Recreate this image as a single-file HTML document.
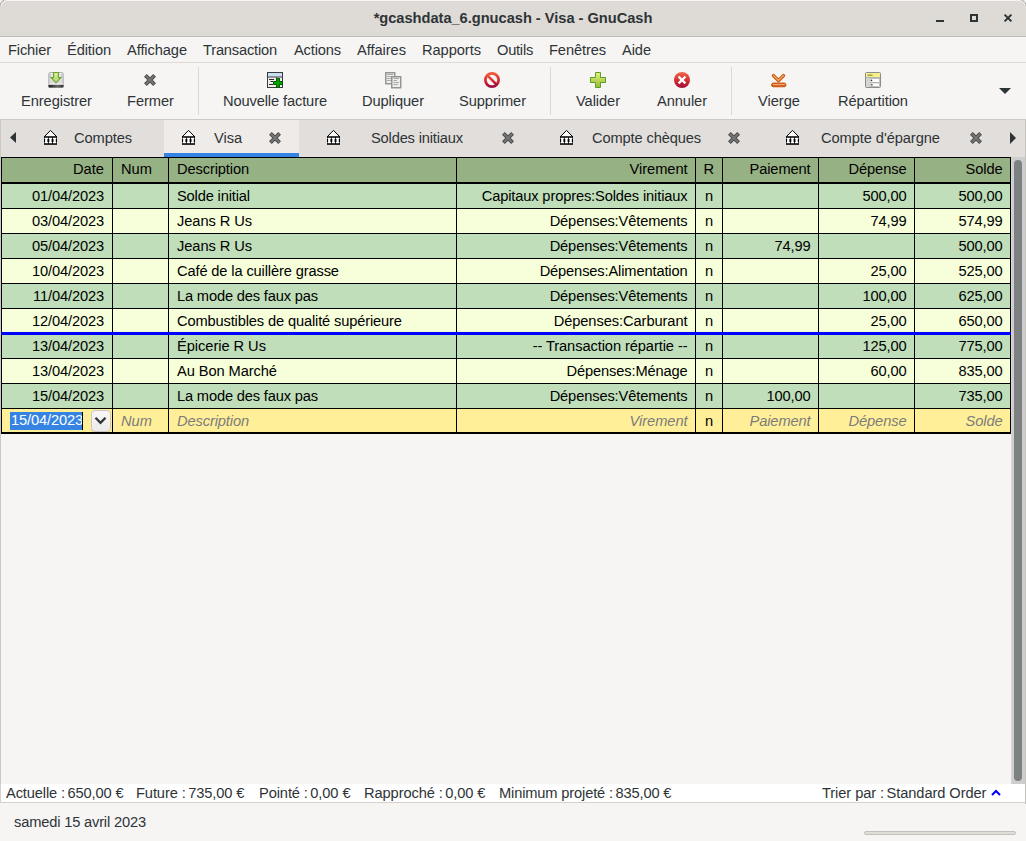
<!DOCTYPE html>
<html><head><meta charset="utf-8">
<style>
*{box-sizing:border-box;margin:0;padding:0}
html,body{width:1026px;height:841px;overflow:hidden;background:#f6f5f4;font-family:"Liberation Sans",sans-serif;font-size:14.67px;color:#2e3436;position:relative;font-kerning:normal}
.abs{position:absolute}
svg{position:absolute;overflow:visible}
.t{position:absolute;white-space:nowrap;line-height:17px}
.c{position:absolute;white-space:nowrap;overflow:hidden;color:#000}
</style></head><body>
<!-- title bar -->
<div class="abs" style="left:0;top:0;width:1026px;height:37px;background:#dedad6;border-bottom:1px solid #bfb9b4"></div>
<div class="abs" style="left:4px;top:0;width:1018px;height:1px;background:#f5f4f3"></div>
<svg style="left:0;top:0" width="8" height="8" viewBox="0 0 8 8"><path d="M0 0H5.5A5.5 5.5 0 0 0 0 5.5Z" fill="#f3f3f3"/><path d="M0.2 5.5A5.3 5.3 0 0 1 5.5 0.2" fill="none" stroke="#6a6a6a" stroke-width="0.9" stroke-dasharray="1 0.9"/><path d="M1.2 6A4.8 4.8 0 0 1 6 1.2" fill="none" stroke="#f8f8f8" stroke-width="0.8"/></svg>
<svg style="left:1018px;top:0" width="8" height="8" viewBox="0 0 8 8"><path d="M8 0H2.5A5.5 5.5 0 0 1 8 5.5Z" fill="#f3f3f3"/><path d="M7.8 5.5A5.3 5.3 0 0 0 2.5 0.2" fill="none" stroke="#6a6a6a" stroke-width="0.9" stroke-dasharray="1 0.9"/><path d="M6.8 6A4.8 4.8 0 0 0 2 1.2" fill="none" stroke="#f8f8f8" stroke-width="0.8"/></svg>
<div class="abs" style="left:0;top:37px;width:1026px;height:1px;background:#fafaf9"></div>
<div class="t" style="letter-spacing:-0.032px;left:0;width:1026px;top:10px;text-align:center;font-weight:bold;font-size:14.67px">*gcashdata_6.gnucash - Visa - GnuCash</div>
<div class="abs" style="left:936px;top:20px;width:8px;height:2px;background:#2e3436"></div>
<div class="abs" style="left:970px;top:14px;width:8px;height:8px;border:2px solid #2e3436"></div>
<svg style="left:1004px;top:14px" width="8" height="8" viewBox="0 0 8 8"><path d="M0.6 0.6L7.4 7.4M7.4 0.6L0.6 7.4" stroke="#2e3436" stroke-width="2"/></svg>
<!-- menu -->
<div class="abs" style="left:0;top:62px;width:1026px;height:1px;background:#dedbd7"></div>
<div class="t" style="letter-spacing:-0.145px;left:8px;top:42px">Fichier</div>
<div class="t" style="letter-spacing:-0.122px;left:67px;top:42px">Édition</div>
<div class="t" style="letter-spacing:-0.100px;left:127px;top:42px">Affichage</div>
<div class="t" style="letter-spacing:-0.191px;left:203px;top:42px">Transaction</div>
<div class="t" style="letter-spacing:-0.158px;left:294px;top:42px">Actions</div>
<div class="t" style="letter-spacing:-0.059px;left:357px;top:42px">Affaires</div>
<div class="t" style="letter-spacing:-0.066px;left:422px;top:42px">Rapports</div>
<div class="t" style="letter-spacing:-0.250px;left:497px;top:42px">Outils</div>
<div class="t" style="letter-spacing:-0.112px;left:549px;top:42px">Fenêtres</div>
<div class="t" style="letter-spacing:-0.090px;left:622px;top:42px">Aide</div>
<!-- toolbar -->
<div class="abs" style="left:0;top:119px;width:1026px;height:1px;background:#cdc8c3"></div>
<div class="t" style="letter-spacing:-0.068px;left:21px;top:93px;">Enregistrer</div><div class="t" style="letter-spacing:-0.045px;left:127px;top:93px;">Fermer</div><div class="t" style="letter-spacing:-0.125px;left:223px;top:93px;">Nouvelle facture</div><div class="t" style="letter-spacing:-0.088px;left:362px;top:93px;">Dupliquer</div><div class="t" style="letter-spacing:-0.074px;left:459px;top:93px;">Supprimer</div><div class="t" style="letter-spacing:-0.082px;left:576px;top:93px;">Valider</div><div class="t" style="letter-spacing:-0.081px;left:657px;top:93px;">Annuler</div><div class="t" style="letter-spacing:-0.023px;left:758px;top:93px;">Vierge</div><div class="t" style="letter-spacing:-0.086px;left:838px;top:93px;">Répartition</div><svg style="left:48px;top:72px" width="16" height="16" viewBox="0 0 16 16"><defs><linearGradient id="gsv" x1="0" y1="0" x2="0" y2="1"><stop offset="0" stop-color="#ececec"/><stop offset="1" stop-color="#cfcfcf"/></linearGradient>
<linearGradient id="gsb" x1="0" y1="0" x2="1" y2="0"><stop offset="0" stop-color="#1e1e1e"/><stop offset="0.6" stop-color="#6a6a6a"/><stop offset="1" stop-color="#2e2e2e"/></linearGradient>
<linearGradient id="gsa" x1="0" y1="0" x2="0" y2="1"><stop offset="0" stop-color="#e0ef9a"/><stop offset="1" stop-color="#b0d468"/></linearGradient></defs>
<rect x="0.8" y="0.5" width="14.4" height="15" rx="1.5" fill="url(#gsv)" stroke="#a5a5a5" stroke-width="0.9"/>
<path d="M2.2 2V5M13.8 2V5" stroke="#b8b8c0" stroke-width="0.8"/>
<rect x="0.5" y="12.6" width="15" height="3" rx="1.2" fill="url(#gsb)"/>
<rect x="1" y="11.5" width="14" height="1.1" fill="#fbfbfb"/>
<path d="M5.6 0.5H10.4V5.6H13L8 10.8L3 5.6H5.6Z" fill="url(#gsa)" stroke="#6aa436" stroke-width="1.1"/></svg><svg style="left:142px;top:72px" width="16" height="16" viewBox="0 0 16 16"><path d="M3.4 3.4L12.6 12.6M12.6 3.4L3.4 12.6" stroke="#4a4a4a" stroke-width="3.9"/>
<path d="M3.9 3.9L12.1 12.1M12.1 3.9L3.9 12.1" stroke="#787878" stroke-width="1.9"/></svg><svg style="left:267px;top:72px" width="16" height="16" viewBox="0 0 16 16"><rect x="0.5" y="0.5" width="15" height="15" fill="#eeeeec" stroke="#3a3a3a"/>
<rect x="1" y="1" width="14" height="3.5" fill="#c6dff4"/>
<rect x="1" y="4.5" width="14" height="1" fill="#3a3a3a"/>
<path d="M2 7.5H7M3.5 9.5H6M2 12.5H6" stroke="#2a2a2a" stroke-width="1"/>
<path d="M9.5 5V6.5" stroke="#555" stroke-width="1"/>
<path d="M9.5 6.5H12.5V9.5H15.5V12.5H12.5V15.5H9.5V12.5H6.5V9.5H9.5Z" fill="#00a000" stroke="#005800" stroke-width="1"/></svg><svg style="left:385px;top:72px" width="16" height="16" viewBox="0 0 16 16"><rect x="0.75" y="0.75" width="9" height="11" fill="#eeeeec" stroke="#90928d" stroke-width="1.4"/>
<path d="M2 2.5H8M2 4.5H8M2 6.5H8M2 8.5H8" stroke="#aaaca8" stroke-width="1"/>
<rect x="6.75" y="4.75" width="9" height="11" fill="#eeeeec" stroke="#90928d" stroke-width="1.4"/>
<path d="M8.5 6.5H14M8.5 8.5H12M8.5 10.5H14M8.5 12.5H13" stroke="#aaaca8" stroke-width="1"/></svg><svg style="left:484px;top:72px" width="16" height="16" viewBox="0 0 16 16"><defs><linearGradient id="gst" x1="0" y1="0" x2="0" y2="1"><stop offset="0" stop-color="#ef5a3c"/><stop offset="0.6" stop-color="#d42a35"/><stop offset="1" stop-color="#9a0e3c"/></linearGradient></defs>
<circle cx="8" cy="8" r="6.6" fill="none" stroke="url(#gst)" stroke-width="2.8"/>
<path d="M3.6 3.6L12.4 12.4" stroke="url(#gst)" stroke-width="2.6"/></svg><svg style="left:590px;top:72px" width="16" height="16" viewBox="0 0 16 16"><defs><linearGradient id="gpl" x1="0" y1="0" x2="0" y2="1"><stop offset="0" stop-color="#e4f27a"/><stop offset="1" stop-color="#93bb2e"/></linearGradient></defs>
<path d="M5.5 0.5H10.5V5.5H15.5V10.5H10.5V15.5H5.5V10.5H0.5V5.5H5.5Z" fill="url(#gpl)" stroke="#5d9c2b" stroke-width="1"/></svg><svg style="left:674px;top:72px" width="16" height="16" viewBox="0 0 16 16"><defs><linearGradient id="gca" x1="0" y1="0" x2="0" y2="1"><stop offset="0" stop-color="#f06a4a"/><stop offset="0.55" stop-color="#d52b33"/><stop offset="1" stop-color="#9c0f3c"/></linearGradient></defs>
<circle cx="8" cy="8" r="8" fill="url(#gca)"/>
<path d="M4.6 4.6L11.4 11.4M11.4 4.6L4.6 11.4" stroke="#fff" stroke-width="2.2"/></svg><svg style="left:771px;top:72px" width="16" height="16" viewBox="0 0 16 16"><path d="M2.5 3.6L7.5 8.6L12.5 3.6" fill="none" stroke="#c85000" stroke-width="3.4" stroke-linecap="round" stroke-linejoin="round"/>
<path d="M2.5 3.6L7.5 8.6L12.5 3.6" fill="none" stroke="#f2a86a" stroke-width="1.4" stroke-linecap="round" stroke-linejoin="round"/>
<rect x="0.5" y="11" width="14.5" height="3.8" rx="1.9" fill="#d65a10" stroke="#c04a00" stroke-width="0.8"/>
<rect x="1.8" y="11.9" width="12" height="1.2" fill="#f4a874"/></svg><svg style="left:865px;top:72px" width="16" height="16" viewBox="0 0 16 16"><rect x="0.5" y="0.5" width="15" height="15" rx="1" fill="#e2e2e0" stroke="#8c8c8a"/>
<rect x="1" y="1" width="14" height="4.2" fill="#f5f08c"/>
<rect x="2.5" y="2.5" width="5" height="1.5" fill="#6f6c2a" opacity="0.6"/>
<rect x="1" y="5.2" width="14" height="0.8" fill="#a8a8a6"/>
<rect x="5" y="6.5" width="9.5" height="3.8" fill="#fff" stroke="#a0a09e" stroke-width="0.6"/>
<rect x="5" y="11" width="9.5" height="3.6" fill="#fff" stroke="#a0a09e" stroke-width="0.6"/>
<rect x="1" y="6" width="3.5" height="9" fill="#d6d6d4"/>
<circle cx="6.5" cy="8.4" r="0.8" fill="#333"/>
<rect x="5.8" y="12.3" width="1.8" height="1.2" fill="#333"/></svg>
<div class="abs" style="left:198px;top:67px;width:1px;height:48px;background:#dcd8d4"></div>
<div class="abs" style="left:550px;top:67px;width:1px;height:48px;background:#dcd8d4"></div>
<div class="abs" style="left:731px;top:67px;width:1px;height:48px;background:#dcd8d4"></div>
<svg style="left:999px;top:88px" width="12" height="6" viewBox="0 0 12 6"><path d="M0 0H12L6 6Z" fill="#2e3436"/></svg>
<!-- tabs -->
<div class="abs" style="left:0;top:120px;width:1026px;height:37px;background:#e1dedb"></div>
<div class="abs" style="left:164px;top:120px;width:135px;height:37px;background:#eeebe9"></div>
<div class="abs" style="left:164px;top:153px;width:135px;height:4px;background:#3584e4"></div>
<svg style="left:10px;top:132px" width="6" height="11" viewBox="0 0 6 11"><path d="M6 0V11L0 5.5Z" fill="#2e3436"/></svg><svg style="left:1010px;top:132px" width="6" height="12" viewBox="0 0 6 12"><path d="M0 0V12L6 6Z" fill="#2e3436"/></svg><svg style="left:44px;top:130px" width="13" height="15" viewBox="0 0 13 15"><path d="M6.5 0.4L12.9 6.9H0.1Z" fill="#fff" stroke="#000" stroke-width="1"/>
<rect x="0" y="6.6" width="13" height="8.2" fill="#000"/>
<path d="M0.55 7.8H3.95V8.9H3.40V12.1H3.95V13.2H0.55V12.1H1.10V8.9H0.55Z" fill="#fff"/><path d="M4.75 7.8H8.15V8.9H7.60V12.1H8.15V13.2H4.75V12.1H5.30V8.9H4.75Z" fill="#fff"/><path d="M8.95 7.8H12.35V8.9H11.80V12.1H12.35V13.2H8.95V12.1H9.50V8.9H8.95Z" fill="#fff"/></svg><div class="t" style="letter-spacing:-0.100px;left:74px;top:130px;">Comptes</div><svg style="left:182px;top:130px" width="13" height="15" viewBox="0 0 13 15"><path d="M6.5 0.4L12.9 6.9H0.1Z" fill="#fff" stroke="#000" stroke-width="1"/>
<rect x="0" y="6.6" width="13" height="8.2" fill="#000"/>
<path d="M0.55 7.8H3.95V8.9H3.40V12.1H3.95V13.2H0.55V12.1H1.10V8.9H0.55Z" fill="#fff"/><path d="M4.75 7.8H8.15V8.9H7.60V12.1H8.15V13.2H4.75V12.1H5.30V8.9H4.75Z" fill="#fff"/><path d="M8.95 7.8H12.35V8.9H11.80V12.1H12.35V13.2H8.95V12.1H9.50V8.9H8.95Z" fill="#fff"/></svg><div class="t" style="letter-spacing:-0.068px;left:214px;top:130px;">Visa</div><svg style="left:267px;top:130px" width="16" height="16" viewBox="0 0 16 16"><path d="M3.4 3.4L12.6 12.6M12.6 3.4L3.4 12.6" stroke="#4a4a4a" stroke-width="3.9"/>
<path d="M3.9 3.9L12.1 12.1M12.1 3.9L3.9 12.1" stroke="#787878" stroke-width="1.9"/></svg><svg style="left:327px;top:130px" width="13" height="15" viewBox="0 0 13 15"><path d="M6.5 0.4L12.9 6.9H0.1Z" fill="#fff" stroke="#000" stroke-width="1"/>
<rect x="0" y="6.6" width="13" height="8.2" fill="#000"/>
<path d="M0.55 7.8H3.95V8.9H3.40V12.1H3.95V13.2H0.55V12.1H1.10V8.9H0.55Z" fill="#fff"/><path d="M4.75 7.8H8.15V8.9H7.60V12.1H8.15V13.2H4.75V12.1H5.30V8.9H4.75Z" fill="#fff"/><path d="M8.95 7.8H12.35V8.9H11.80V12.1H12.35V13.2H8.95V12.1H9.50V8.9H8.95Z" fill="#fff"/></svg><div class="t" style="letter-spacing:-0.173px;left:371px;top:130px;">Soldes initiaux</div><svg style="left:500px;top:130px" width="16" height="16" viewBox="0 0 16 16"><path d="M3.4 3.4L12.6 12.6M12.6 3.4L3.4 12.6" stroke="#4a4a4a" stroke-width="3.9"/>
<path d="M3.9 3.9L12.1 12.1M12.1 3.9L3.9 12.1" stroke="#787878" stroke-width="1.9"/></svg><svg style="left:560px;top:130px" width="13" height="15" viewBox="0 0 13 15"><path d="M6.5 0.4L12.9 6.9H0.1Z" fill="#fff" stroke="#000" stroke-width="1"/>
<rect x="0" y="6.6" width="13" height="8.2" fill="#000"/>
<path d="M0.55 7.8H3.95V8.9H3.40V12.1H3.95V13.2H0.55V12.1H1.10V8.9H0.55Z" fill="#fff"/><path d="M4.75 7.8H8.15V8.9H7.60V12.1H8.15V13.2H4.75V12.1H5.30V8.9H4.75Z" fill="#fff"/><path d="M8.95 7.8H12.35V8.9H11.80V12.1H12.35V13.2H8.95V12.1H9.50V8.9H8.95Z" fill="#fff"/></svg><div class="t" style="letter-spacing:-0.136px;left:592px;top:130px;">Compte chèques</div><svg style="left:726px;top:130px" width="16" height="16" viewBox="0 0 16 16"><path d="M3.4 3.4L12.6 12.6M12.6 3.4L3.4 12.6" stroke="#4a4a4a" stroke-width="3.9"/>
<path d="M3.9 3.9L12.1 12.1M12.1 3.9L3.9 12.1" stroke="#787878" stroke-width="1.9"/></svg><svg style="left:786px;top:130px" width="13" height="15" viewBox="0 0 13 15"><path d="M6.5 0.4L12.9 6.9H0.1Z" fill="#fff" stroke="#000" stroke-width="1"/>
<rect x="0" y="6.6" width="13" height="8.2" fill="#000"/>
<path d="M0.55 7.8H3.95V8.9H3.40V12.1H3.95V13.2H0.55V12.1H1.10V8.9H0.55Z" fill="#fff"/><path d="M4.75 7.8H8.15V8.9H7.60V12.1H8.15V13.2H4.75V12.1H5.30V8.9H4.75Z" fill="#fff"/><path d="M8.95 7.8H12.35V8.9H11.80V12.1H12.35V13.2H8.95V12.1H9.50V8.9H8.95Z" fill="#fff"/></svg><div class="t" style="letter-spacing:-0.077px;left:821px;top:130px;">Compte d'épargne</div><svg style="left:968px;top:130px" width="16" height="16" viewBox="0 0 16 16"><path d="M3.4 3.4L12.6 12.6M12.6 3.4L3.4 12.6" stroke="#4a4a4a" stroke-width="3.9"/>
<path d="M3.9 3.9L12.1 12.1M12.1 3.9L3.9 12.1" stroke="#787878" stroke-width="1.9"/></svg>
<div class="abs" style="left:1px;top:157px;width:1010px;height:277px;background:#000"></div><div class="abs" style="left:2px;top:158px;width:1008px;height:24px;background:#96b183"></div><div class="abs" style="left:2px;top:184px;width:1008px;height:24px;background:#bfdeb9"></div><div class="abs" style="left:2px;top:209px;width:1008px;height:24px;background:#f6ffda"></div><div class="abs" style="left:2px;top:234px;width:1008px;height:24px;background:#bfdeb9"></div><div class="abs" style="left:2px;top:259px;width:1008px;height:24px;background:#f6ffda"></div><div class="abs" style="left:2px;top:284px;width:1008px;height:24px;background:#bfdeb9"></div><div class="abs" style="left:2px;top:309px;width:1008px;height:24px;background:#f6ffda"></div><div class="abs" style="left:2px;top:334px;width:1008px;height:24px;background:#bfdeb9"></div><div class="abs" style="left:2px;top:359px;width:1008px;height:24px;background:#f6ffda"></div><div class="abs" style="left:2px;top:384px;width:1008px;height:24px;background:#bfdeb9"></div><div class="abs" style="left:2px;top:409px;width:1008px;height:23px;background:#ffef98"></div><div class="abs" style="left:1px;top:157px;width:1px;height:277px;background:#000"></div><div class="abs" style="left:112px;top:157px;width:1px;height:277px;background:#000"></div><div class="abs" style="left:168px;top:157px;width:1px;height:277px;background:#000"></div><div class="abs" style="left:456px;top:157px;width:1px;height:277px;background:#000"></div><div class="abs" style="left:695px;top:157px;width:1px;height:277px;background:#000"></div><div class="abs" style="left:722px;top:157px;width:1px;height:277px;background:#000"></div><div class="abs" style="left:818px;top:157px;width:1px;height:277px;background:#000"></div><div class="abs" style="left:914px;top:157px;width:1px;height:277px;background:#000"></div><div class="abs" style="left:1010px;top:157px;width:1px;height:277px;background:#000"></div><div class="abs" style="left:1px;top:332px;width:1010px;height:3px;background:#0000ff"></div><div class="c" style="letter-spacing:0.003px;left:2px;top:157px;width:110px;height:24px;line-height:24px;text-align:right;padding-right:8px;">Date</div><div class="c" style="letter-spacing:0.009px;left:113px;top:157px;width:55px;height:24px;line-height:24px;text-align:left;padding-left:8px;">Num</div><div class="c" style="letter-spacing:-0.125px;left:169px;top:157px;width:287px;height:24px;line-height:24px;text-align:left;padding-left:8px;">Description</div><div class="c" style="letter-spacing:-0.055px;left:457px;top:157px;width:238px;height:24px;line-height:24px;text-align:right;padding-right:7.5px;">Virement</div><div class="c" style="letter-spacing:0.406px;left:696px;top:157px;width:26px;height:24px;line-height:24px;text-align:center;">R</div><div class="c" style="letter-spacing:-0.122px;left:723px;top:157px;width:95px;height:24px;line-height:24px;text-align:right;padding-right:7.5px;">Paiement</div><div class="c" style="letter-spacing:-0.103px;left:819px;top:157px;width:95px;height:24px;line-height:24px;text-align:right;padding-right:7.5px;">Dépense</div><div class="c" style="letter-spacing:-0.104px;left:915px;top:157px;width:95px;height:24px;line-height:24px;text-align:right;padding-right:7.5px;">Solde</div><div class="c" style="letter-spacing:-0.142px;left:2px;top:184px;width:110px;height:24px;line-height:24px;text-align:right;padding-right:8px;">01/04/2023</div><div class="c" style="letter-spacing:0.000px;left:113px;top:184px;width:55px;height:24px;line-height:24px;text-align:left;padding-left:8px;"></div><div class="c" style="letter-spacing:-0.156px;left:169px;top:184px;width:287px;height:24px;line-height:24px;text-align:left;padding-left:8px;">Solde initial</div><div class="c" style="letter-spacing:-0.137px;left:457px;top:184px;width:238px;height:24px;line-height:24px;text-align:right;padding-right:7.5px;">Capitaux propres:Soldes initiaux</div><div class="c" style="letter-spacing:-0.159px;left:696px;top:184px;width:26px;height:24px;line-height:24px;text-align:center;">n</div><div class="c" style="letter-spacing:0.000px;left:723px;top:184px;width:95px;height:24px;line-height:24px;text-align:right;padding-right:7.5px;"></div><div class="c" style="letter-spacing:-0.145px;left:819px;top:184px;width:95px;height:24px;line-height:24px;text-align:right;padding-right:7.5px;">500,00</div><div class="c" style="letter-spacing:-0.145px;left:915px;top:184px;width:95px;height:24px;line-height:24px;text-align:right;padding-right:7.5px;">500,00</div><div class="c" style="letter-spacing:-0.142px;left:2px;top:209px;width:110px;height:24px;line-height:24px;text-align:right;padding-right:8px;">03/04/2023</div><div class="c" style="letter-spacing:0.000px;left:113px;top:209px;width:55px;height:24px;line-height:24px;text-align:left;padding-left:8px;"></div><div class="c" style="letter-spacing:-0.082px;left:169px;top:209px;width:287px;height:24px;line-height:24px;text-align:left;padding-left:8px;">Jeans R Us</div><div class="c" style="letter-spacing:-0.126px;left:457px;top:209px;width:238px;height:24px;line-height:24px;text-align:right;padding-right:7.5px;">Dépenses:Vêtements</div><div class="c" style="letter-spacing:-0.159px;left:696px;top:209px;width:26px;height:24px;line-height:24px;text-align:center;">n</div><div class="c" style="letter-spacing:0.000px;left:723px;top:209px;width:95px;height:24px;line-height:24px;text-align:right;padding-right:7.5px;"></div><div class="c" style="letter-spacing:-0.142px;left:819px;top:209px;width:95px;height:24px;line-height:24px;text-align:right;padding-right:7.5px;">74,99</div><div class="c" style="letter-spacing:-0.145px;left:915px;top:209px;width:95px;height:24px;line-height:24px;text-align:right;padding-right:7.5px;">574,99</div><div class="c" style="letter-spacing:-0.142px;left:2px;top:234px;width:110px;height:24px;line-height:24px;text-align:right;padding-right:8px;">05/04/2023</div><div class="c" style="letter-spacing:0.000px;left:113px;top:234px;width:55px;height:24px;line-height:24px;text-align:left;padding-left:8px;"></div><div class="c" style="letter-spacing:-0.082px;left:169px;top:234px;width:287px;height:24px;line-height:24px;text-align:left;padding-left:8px;">Jeans R Us</div><div class="c" style="letter-spacing:-0.126px;left:457px;top:234px;width:238px;height:24px;line-height:24px;text-align:right;padding-right:7.5px;">Dépenses:Vêtements</div><div class="c" style="letter-spacing:-0.159px;left:696px;top:234px;width:26px;height:24px;line-height:24px;text-align:center;">n</div><div class="c" style="letter-spacing:-0.142px;left:723px;top:234px;width:95px;height:24px;line-height:24px;text-align:right;padding-right:7.5px;">74,99</div><div class="c" style="letter-spacing:0.000px;left:819px;top:234px;width:95px;height:24px;line-height:24px;text-align:right;padding-right:7.5px;"></div><div class="c" style="letter-spacing:-0.145px;left:915px;top:234px;width:95px;height:24px;line-height:24px;text-align:right;padding-right:7.5px;">500,00</div><div class="c" style="letter-spacing:-0.142px;left:2px;top:259px;width:110px;height:24px;line-height:24px;text-align:right;padding-right:8px;">10/04/2023</div><div class="c" style="letter-spacing:0.000px;left:113px;top:259px;width:55px;height:24px;line-height:24px;text-align:left;padding-left:8px;"></div><div class="c" style="letter-spacing:-0.136px;left:169px;top:259px;width:287px;height:24px;line-height:24px;text-align:left;padding-left:8px;">Café de la cuillère grasse</div><div class="c" style="letter-spacing:-0.136px;left:457px;top:259px;width:238px;height:24px;line-height:24px;text-align:right;padding-right:7.5px;">Dépenses:Alimentation</div><div class="c" style="letter-spacing:-0.159px;left:696px;top:259px;width:26px;height:24px;line-height:24px;text-align:center;">n</div><div class="c" style="letter-spacing:0.000px;left:723px;top:259px;width:95px;height:24px;line-height:24px;text-align:right;padding-right:7.5px;"></div><div class="c" style="letter-spacing:-0.142px;left:819px;top:259px;width:95px;height:24px;line-height:24px;text-align:right;padding-right:7.5px;">25,00</div><div class="c" style="letter-spacing:-0.145px;left:915px;top:259px;width:95px;height:24px;line-height:24px;text-align:right;padding-right:7.5px;">525,00</div><div class="c" style="letter-spacing:-0.133px;left:2px;top:284px;width:110px;height:24px;line-height:24px;text-align:right;padding-right:8px;">11/04/2023</div><div class="c" style="letter-spacing:0.000px;left:113px;top:284px;width:55px;height:24px;line-height:24px;text-align:left;padding-left:8px;"></div><div class="c" style="letter-spacing:-0.168px;left:169px;top:284px;width:287px;height:24px;line-height:24px;text-align:left;padding-left:8px;">La mode des faux pas</div><div class="c" style="letter-spacing:-0.126px;left:457px;top:284px;width:238px;height:24px;line-height:24px;text-align:right;padding-right:7.5px;">Dépenses:Vêtements</div><div class="c" style="letter-spacing:-0.159px;left:696px;top:284px;width:26px;height:24px;line-height:24px;text-align:center;">n</div><div class="c" style="letter-spacing:0.000px;left:723px;top:284px;width:95px;height:24px;line-height:24px;text-align:right;padding-right:7.5px;"></div><div class="c" style="letter-spacing:-0.145px;left:819px;top:284px;width:95px;height:24px;line-height:24px;text-align:right;padding-right:7.5px;">100,00</div><div class="c" style="letter-spacing:-0.145px;left:915px;top:284px;width:95px;height:24px;line-height:24px;text-align:right;padding-right:7.5px;">625,00</div><div class="c" style="letter-spacing:-0.142px;left:2px;top:309px;width:110px;height:24px;line-height:24px;text-align:right;padding-right:8px;">12/04/2023</div><div class="c" style="letter-spacing:0.000px;left:113px;top:309px;width:55px;height:24px;line-height:24px;text-align:left;padding-left:8px;"></div><div class="c" style="letter-spacing:-0.146px;left:169px;top:309px;width:287px;height:24px;line-height:24px;text-align:left;padding-left:8px;">Combustibles de qualité supérieure</div><div class="c" style="letter-spacing:-0.076px;left:457px;top:309px;width:238px;height:24px;line-height:24px;text-align:right;padding-right:7.5px;">Dépenses:Carburant</div><div class="c" style="letter-spacing:-0.159px;left:696px;top:309px;width:26px;height:24px;line-height:24px;text-align:center;">n</div><div class="c" style="letter-spacing:0.000px;left:723px;top:309px;width:95px;height:24px;line-height:24px;text-align:right;padding-right:7.5px;"></div><div class="c" style="letter-spacing:-0.142px;left:819px;top:309px;width:95px;height:24px;line-height:24px;text-align:right;padding-right:7.5px;">25,00</div><div class="c" style="letter-spacing:-0.145px;left:915px;top:309px;width:95px;height:24px;line-height:24px;text-align:right;padding-right:7.5px;">650,00</div><div class="c" style="letter-spacing:-0.142px;left:2px;top:334px;width:110px;height:24px;line-height:24px;text-align:right;padding-right:8px;">13/04/2023</div><div class="c" style="letter-spacing:0.000px;left:113px;top:334px;width:55px;height:24px;line-height:24px;text-align:left;padding-left:8px;"></div><div class="c" style="letter-spacing:-0.052px;left:169px;top:334px;width:287px;height:24px;line-height:24px;text-align:left;padding-left:8px;">Épicerie R Us</div><div class="c" style="letter-spacing:-0.090px;left:457px;top:334px;width:238px;height:24px;line-height:24px;text-align:right;padding-right:7.5px;">-- Transaction répartie --</div><div class="c" style="letter-spacing:-0.159px;left:696px;top:334px;width:26px;height:24px;line-height:24px;text-align:center;">n</div><div class="c" style="letter-spacing:0.000px;left:723px;top:334px;width:95px;height:24px;line-height:24px;text-align:right;padding-right:7.5px;"></div><div class="c" style="letter-spacing:-0.145px;left:819px;top:334px;width:95px;height:24px;line-height:24px;text-align:right;padding-right:7.5px;">125,00</div><div class="c" style="letter-spacing:-0.145px;left:915px;top:334px;width:95px;height:24px;line-height:24px;text-align:right;padding-right:7.5px;">775,00</div><div class="c" style="letter-spacing:-0.142px;left:2px;top:359px;width:110px;height:24px;line-height:24px;text-align:right;padding-right:8px;">13/04/2023</div><div class="c" style="letter-spacing:0.000px;left:113px;top:359px;width:55px;height:24px;line-height:24px;text-align:left;padding-left:8px;"></div><div class="c" style="letter-spacing:-0.086px;left:169px;top:359px;width:287px;height:24px;line-height:24px;text-align:left;padding-left:8px;">Au Bon Marché</div><div class="c" style="letter-spacing:-0.143px;left:457px;top:359px;width:238px;height:24px;line-height:24px;text-align:right;padding-right:7.5px;">Dépenses:Ménage</div><div class="c" style="letter-spacing:-0.159px;left:696px;top:359px;width:26px;height:24px;line-height:24px;text-align:center;">n</div><div class="c" style="letter-spacing:0.000px;left:723px;top:359px;width:95px;height:24px;line-height:24px;text-align:right;padding-right:7.5px;"></div><div class="c" style="letter-spacing:-0.142px;left:819px;top:359px;width:95px;height:24px;line-height:24px;text-align:right;padding-right:7.5px;">60,00</div><div class="c" style="letter-spacing:-0.145px;left:915px;top:359px;width:95px;height:24px;line-height:24px;text-align:right;padding-right:7.5px;">835,00</div><div class="c" style="letter-spacing:-0.142px;left:2px;top:384px;width:110px;height:24px;line-height:24px;text-align:right;padding-right:8px;">15/04/2023</div><div class="c" style="letter-spacing:0.000px;left:113px;top:384px;width:55px;height:24px;line-height:24px;text-align:left;padding-left:8px;"></div><div class="c" style="letter-spacing:-0.168px;left:169px;top:384px;width:287px;height:24px;line-height:24px;text-align:left;padding-left:8px;">La mode des faux pas</div><div class="c" style="letter-spacing:-0.126px;left:457px;top:384px;width:238px;height:24px;line-height:24px;text-align:right;padding-right:7.5px;">Dépenses:Vêtements</div><div class="c" style="letter-spacing:-0.159px;left:696px;top:384px;width:26px;height:24px;line-height:24px;text-align:center;">n</div><div class="c" style="letter-spacing:-0.145px;left:723px;top:384px;width:95px;height:24px;line-height:24px;text-align:right;padding-right:7.5px;">100,00</div><div class="c" style="letter-spacing:0.000px;left:819px;top:384px;width:95px;height:24px;line-height:24px;text-align:right;padding-right:7.5px;"></div><div class="c" style="letter-spacing:-0.145px;left:915px;top:384px;width:95px;height:24px;line-height:24px;text-align:right;padding-right:7.5px;">735,00</div><div class="c" style="letter-spacing:0.000px;left:2px;top:409px;width:110px;height:24px;line-height:24px;text-align:right;padding-right:8px;"></div><div class="c" style="letter-spacing:0.009px;left:113px;top:409px;width:55px;height:24px;line-height:24px;text-align:left;padding-left:8px;color:#7c7c7c;font-style:italic;">Num</div><div class="c" style="letter-spacing:-0.125px;left:169px;top:409px;width:287px;height:24px;line-height:24px;text-align:left;padding-left:8px;color:#7c7c7c;font-style:italic;">Description</div><div class="c" style="letter-spacing:-0.055px;left:457px;top:409px;width:238px;height:24px;line-height:24px;text-align:right;padding-right:7.5px;color:#7c7c7c;font-style:italic;">Virement</div><div class="c" style="letter-spacing:-0.159px;left:696px;top:409px;width:26px;height:24px;line-height:24px;text-align:center;">n</div><div class="c" style="letter-spacing:-0.122px;left:723px;top:409px;width:95px;height:24px;line-height:24px;text-align:right;padding-right:7.5px;color:#7c7c7c;font-style:italic;">Paiement</div><div class="c" style="letter-spacing:-0.103px;left:819px;top:409px;width:95px;height:24px;line-height:24px;text-align:right;padding-right:7.5px;color:#7c7c7c;font-style:italic;">Dépense</div><div class="c" style="letter-spacing:-0.104px;left:915px;top:409px;width:95px;height:24px;line-height:24px;text-align:right;padding-right:7.5px;color:#7c7c7c;font-style:italic;">Solde</div><div class="abs" style="left:10px;top:412px;width:72px;height:18px;background:#3584e4"></div><div class="c" style="letter-spacing:-0.142px;left:11px;top:408px;height:24px;line-height:24px;color:#fff">15/04/2023</div><div class="abs" style="left:82px;top:412px;width:1px;height:18px;background:#000"></div><div class="abs" style="left:91px;top:410px;width:20px;height:22px;border:1px solid #cdc7c2;border-radius:4px;background:linear-gradient(#f8f7f6,#edebe9);box-shadow:0 1px 1px rgba(0,0,0,0.07)"></div><svg class="abs" style="left:94px;top:416px" width="13" height="10" viewBox="0 0 13 10"><path d="M1.5 1.8 L6.5 6.8 L11.5 1.8" fill="none" stroke="#2e3436" stroke-width="2.3"/></svg>
<!-- scrollbar -->
<div class="abs" style="left:1011px;top:157px;width:14px;height:627px;background:#cecece;border-left:1px solid #d6d6d6"></div>
<div class="abs" style="left:1014px;top:160px;width:8px;height:621px;background:#7e8182;border-radius:4px"></div>
<div class="abs" style="left:1025px;top:120px;width:1px;height:684px;background:#c6c1bc"></div>
<div class="abs" style="left:0;top:120px;width:1px;height:683px;background:#cdc8c3"></div>
<!-- summary -->
<div class="abs" style="left:0;top:784px;width:1025px;height:19px;background:#fff;border-bottom:1px solid #d5d0cb;border-left:1px solid #d5d0cb"></div>
<div class="t" style="letter-spacing:-0.136px;left:6px;top:785px;">Actuelle :<i style="margin-left:2.5px"></i>650,00 €</div><div class="t" style="letter-spacing:-0.103px;left:136px;top:785px;">Future :<i style="margin-left:2.5px"></i>735,00 €</div><div class="t" style="letter-spacing:-0.110px;left:259px;top:785px;">Pointé :<i style="margin-left:2.5px"></i>0,00 €</div><div class="t" style="letter-spacing:-0.100px;left:364px;top:785px;">Rapproché :<i style="margin-left:2.5px"></i>0,00 €</div><div class="t" style="letter-spacing:-0.147px;left:499px;top:785px;">Minimum projeté :<i style="margin-left:2.5px"></i>835,00 €</div><div class="t" style="letter-spacing:-0.086px;left:822px;top:785px;">Trier par :<i style="margin-left:2.5px"></i>Standard Order</div><svg style="left:991px;top:790px" width="10" height="6" viewBox="0 0 10 6"><path d="M1 5L5 1L9 5" fill="none" stroke="#0000ff" stroke-width="2"/></svg>
<!-- status -->
<div class="t" style="letter-spacing:-0.168px;left:14px;top:814px">samedi 15 avril 2023</div>
<div class="abs" style="left:864px;top:831px;width:152px;height:4px;background:#e0dcd8;border:1px solid #c5c0bb;border-radius:3px"></div>
</body></html>
